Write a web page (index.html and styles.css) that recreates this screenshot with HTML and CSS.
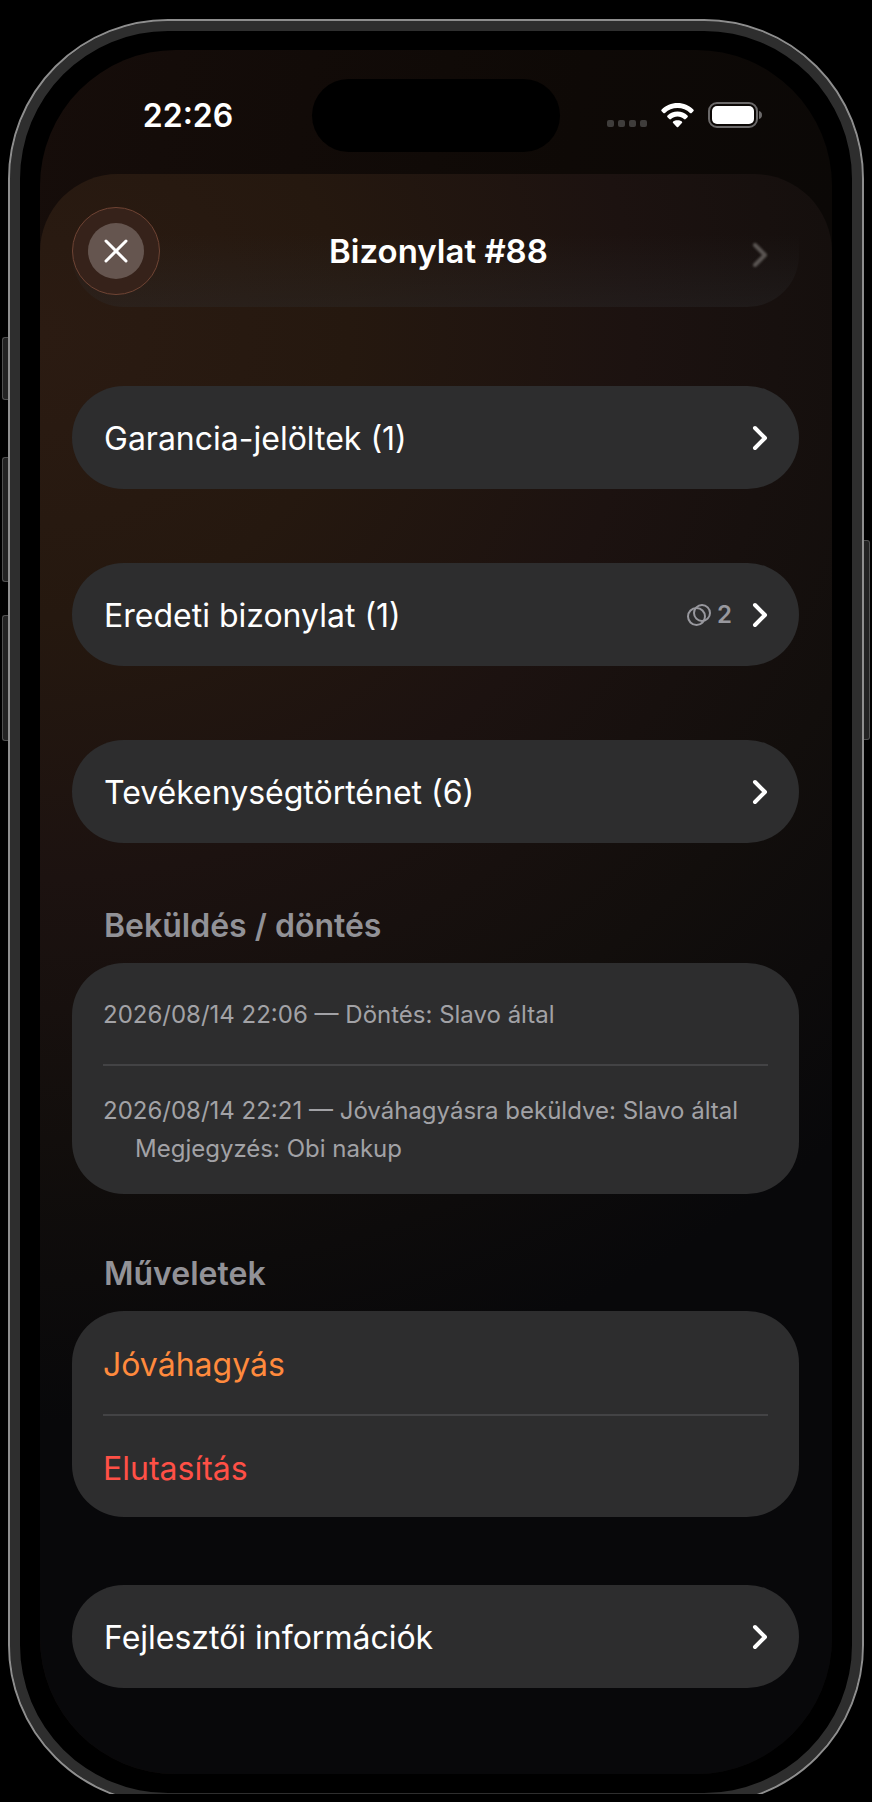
FILE: index.html
```html
<!DOCTYPE html>
<html lang="hu">
<head>
<meta charset="utf-8">
<meta name="viewport" content="width=device-width, initial-scale=1">
<title>Bizonylat #88</title>
<link rel="stylesheet" href="styles.css">
</head>
<body>
<svg class="defs" aria-hidden="true">
  <symbol id="chevron" viewBox="0 0 16 26"><path d="M3 3l10 10L3 23" fill="none" stroke="currentColor" stroke-width="4" stroke-linecap="round" stroke-linejoin="round"/></symbol>
</svg>
<div class="stage">
  <div class="phone">
    <span class="key key-action"></span>
    <span class="key key-up"></span>
    <span class="key key-down"></span>
    <span class="key key-power"></span>
    <div class="screen">
      <div class="status">
        <time class="clock">22:26</time>
        <span class="island"></span>
        <div class="indicators">
          <span class="dots"><i></i><i></i><i></i><i></i></span>
          <svg class="wifi" viewBox="0 0 33 25" aria-hidden="true">
            <path d="M16.500 0C22.700 0 28.300 2.500 32.300 6.500Q33.200 7.400 32.300 8.300L30.700 9.900Q29.900 10.700 29 9.900C25.700 6.800 21.300 5 16.500 5S7.300 6.800 4 9.900Q3.100 10.700 2.300 9.900L.7 8.300Q-.2 7.400.7 6.500C4.700 2.500 10.300 0 16.500 0Z"/>
            <path d="M16.500 8.600C20.400 8.600 23.900 10.100 26.500 12.500Q27.400 13.400 26.500 14.300L24.700 16.100Q23.900 16.800 23 16.100C21.200 14.500 19 13.600 16.500 13.600S11.800 14.500 10 16.100Q9.100 16.800 8.300 16.100L6.500 14.300Q5.600 13.400 6.500 12.500C9.100 10.100 12.600 8.600 16.500 8.600Z"/>
            <path d="M16.500 17.200C18.200 17.200 19.700 17.700 20.900 18.600Q21.700 19.300 20.900 20.100L17.200 23.900Q16.500 24.600 15.800 23.900L12.100 20.100Q11.300 19.300 12.100 18.600C13.300 17.700 14.800 17.200 16.500 17.200Z"/>
          </svg>
          <svg class="battery" viewBox="0 0 54 26" aria-hidden="true">
            <rect x="1" y="1" width="48" height="24" rx="8" fill="none" stroke="#6b6969" stroke-width="2"/>
            <rect x="4" y="4" width="42" height="18" rx="5" fill="#fff"/>
            <path d="M51 9c2 .6 3 2 3 4s-1 3.400-3 4Z" fill="#6b6969"/>
          </svg>
        </div>
      </div>
      <main class="sheet">
        <header class="header">
          <div class="passing-row"><svg class="chevron" aria-hidden="true"><use href="#chevron"/></svg></div>
          <button class="close" type="button" aria-label="Bezárás">
            <span class="close-disc"><svg viewBox="0 0 24 24" aria-hidden="true"><path d="M2 2l20 20M22 2L2 22"/></svg></span>
          </button>
          <h1 class="title">Bizonylat #88</h1>
        </header>
        <div class="content">
          <div class="links">
            <button class="card row" type="button"><span class="label">Garancia-jelöltek (1)</span><svg class="chevron" aria-hidden="true"><use href="#chevron"/></svg></button>
            <button class="card row" type="button">
              <span class="label">Eredeti bizonylat (1)</span>
              <span class="count"><svg viewBox="0 0 24 22" aria-hidden="true"><circle cx="9.500" cy="12.500" r="8.500"/><circle cx="15" cy="9" r="8"/></svg>2</span>
              <svg class="chevron" aria-hidden="true"><use href="#chevron"/></svg>
            </button>
            <button class="card row" type="button"><span class="label">Tevékenységtörténet (6)</span><svg class="chevron" aria-hidden="true"><use href="#chevron"/></svg></button>
          </div>
          <section class="section">
            <h2 class="heading">Beküldés / döntés</h2>
            <ul class="card group">
              <li class="event event-first">2026/08/14 22:06 — Döntés: Slavo által</li>
              <li class="event">2026/08/14 22:21 — Jóváhagyásra beküldve: Slavo által<span class="note">Megjegyzés: Obi nakup</span></li>
            </ul>
          </section>
          <section class="section section-actions">
            <h2 class="heading">Műveletek</h2>
            <div class="card group">
              <button class="action approve" type="button">Jóváhagyás</button>
              <button class="action reject" type="button">Elutasítás</button>
            </div>
          </section>
          <button class="card row developer" type="button"><span class="label">Fejlesztői információk</span><svg class="chevron" aria-hidden="true"><use href="#chevron"/></svg></button>
        </div>
      </main>
    </div>
  </div>
</div>
</body>
</html>
```
FILE: styles.css
```css
* {
  box-sizing: border-box;
}

body {
  margin: 0;
  background: #000;
  color: #fff;
  font-family: Inter, "Liberation Sans", sans-serif;
  font-size: 32px;
}

button {
  margin: 0;
  border: 0;
  background: none;
  color: inherit;
  font: inherit;
  text-align: left;
}

.defs {
  position: absolute;
  width: 0;
  height: 0;
}

/* The lower rim of the device is cut off by the stage. */
.stage {
  overflow: hidden;
  margin-bottom: 8px;
  padding: 19px 8px 0;
}

.phone {
  position: relative;
  margin-bottom: -11px;
  padding: 29px 30px 29px;
  border: 2px solid #8e8e8e;
  border-radius: 160px;
  background: #000;
  box-shadow: inset 0 0 0 10px #2e2e2e;
}

.key {
  position: absolute;
  left: -8px;
  width: 6px;
  border: 1px solid #505050;
  border-right: 0;
  border-radius: 3px 0 0 3px;
  background: #222;
}

.key-action {
  top: 316px;
  height: 63px;
}

.key-up {
  top: 436px;
  height: 125px;
}

.key-down {
  top: 594px;
  height: 126px;
}

.key-power {
  top: 519px;
  right: -8px;
  left: auto;
  height: 200px;
  border: 1px solid #505050;
  border-left: 0;
  border-radius: 0 3px 3px 0;
}

.screen {
  overflow: hidden;
  border-radius: 136px;
  background: linear-gradient(100deg, #160d0a, #0e0906 50%, #080706);
}

.status {
  display: grid;
  grid-template-columns: 1fr 248px 1fr;
  align-items: center;
  height: 124px;
  padding: 6px 0 0;
}

.clock {
  padding-left: 24px;
  font-weight: 600;
  text-align: center;
}

.island {
  height: 73px;
  border-radius: 37px;
  background: #000;
}

.indicators {
  display: flex;
  align-items: center;
  justify-content: flex-end;
  gap: 14px;
  padding-right: 70px;
}

.dots {
  display: flex;
  gap: 4px;
  padding-top: 16px;
}

.dots i {
  width: 7px;
  height: 7px;
  border-radius: 2px;
  background: #3f3d3b;
}

.wifi {
  width: 33px;
  height: 25px;
  fill: #fff;
}

.battery {
  width: 54px;
  height: 26px;
}

.sheet {
  border-radius: 78px 78px 0 0;
  background: radial-gradient(ellipse 150% 68% at 0% 10%, #2b1b12 0%, #25180f 26%, #1c1210 50%, #120e0c 74%, #08080a 100%);
}

.header {
  position: relative;
  display: grid;
  grid-template-columns: 88px 1fr 88px;
  align-items: center;
  padding: 33px 33px 12px 32px;
}

/* A list row that scrolls away behind the header. */
.passing-row {
  position: absolute;
  inset: 0 33px 0 32px;
  display: flex;
  align-items: center;
  justify-content: flex-end;
  padding: 29px 31px 0 0;
  border-radius: 0 0 52px 52px;
  background: linear-gradient(transparent 45%, rgba(46, 47, 49, 0.32));
}

.passing-row .chevron {
  color: #5b5653;
  filter: blur(1px);
}

.close {
  position: relative;
  display: grid;
  place-items: center;
  width: 88px;
  height: 88px;
  padding: 0;
  border: 1px solid #6f4434;
  border-radius: 50%;
  background: #36221a;
}

.close-disc {
  display: grid;
  place-items: center;
  width: 56px;
  height: 56px;
  border-radius: 50%;
  background: #65554f;
}

.close-disc svg {
  width: 24px;
  height: 24px;
  fill: none;
  stroke: #fff;
  stroke-width: 3;
  stroke-linecap: round;
}

.title {
  position: relative;
  margin: 0;
  padding-left: 6px;
  font-size: 33px;
  font-weight: 600;
  text-align: center;
}

.content {
  padding: 79px 33px 86px 32px;
}

.links {
  display: grid;
  gap: 74px;
}

.card {
  width: 100%;
  border-radius: 52px;
  background: #2d2d2e;
}

.row {
  display: flex;
  align-items: center;
  min-height: 103px;
  padding: 16px 31px 16px 32px;
}

.label {
  flex: 1;
  padding-top: 2px;
}

.chevron {
  width: 16px;
  height: 26px;
}

.count {
  display: flex;
  align-items: center;
  gap: 6px;
  padding-right: 20px;
  color: #98989e;
  font-size: 24px;
  font-weight: 600;
}

.count svg {
  width: 24px;
  height: 22px;
  fill: none;
  stroke: currentColor;
  stroke-width: 2;
}

.section {
  padding-top: 62px;
}

.section-actions {
  padding-top: 59px;
}

.heading {
  margin: 0;
  padding: 0 32px 16px;
  color: #929297;
  font-size: 32px;
  font-weight: 600;
  line-height: 42px;
}

.group {
  margin: 0;
  padding: 0 31px;
  list-style: none;
}

.group > * + * {
  border-top: 2px solid #434345;
}

.event {
  padding: 26px 0;
  color: #a2a2a6;
  font-size: 24px;
  line-height: 38px;
}

.event-first {
  padding: 33px 0 30px;
}

.note {
  display: block;
  padding-left: 32px;
}

.action {
  display: block;
  width: 100%;
  min-height: 103px;
  padding: 4px 0 0;
}

.approve {
  color: #ff8a3d;
}

.reject {
  color: #ff5046;
}

.developer {
  margin-top: 68px;
}
```
